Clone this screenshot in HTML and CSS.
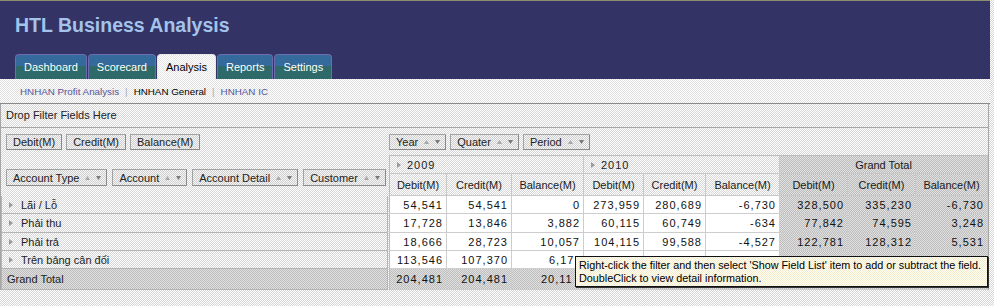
FILE: index.html
```html
<!DOCTYPE html>
<html lang="vi">
<head>
<meta charset="utf-8">
<title>HTL Business Analysis</title>
<link rel="stylesheet" href="styles.css">
</head>
<body>
<div class="app">
  <header class="masthead">
    <h1 class="brand">HTL Business Analysis</h1>
    <nav class="tabs">
      <span class="tab">Dashboard</span>
      <span class="tab">Scorecard</span>
      <span class="tab active">Analysis</span>
      <span class="tab">Reports</span>
      <span class="tab">Settings</span>
    </nav>
  </header>

  <div class="subnav">
    <a class="sublink">HNHAN Profit Analysis</a><span class="sep">|</span><span class="sublink current">HNHAN General</span><span class="sep">|</span><a class="sublink">HNHAN IC</a>
  </div>

  <section class="pivot">
    <div class="filter-zone">Drop Filter Fields Here</div>
    <div class="grid">
      <div class="data-fields">
        <span class="fbtn">Debit(M)</span>
        <span class="fbtn">Credit(M)</span>
        <span class="fbtn">Balance(M)</span>
      </div>
      <div class="col-fields">
        <span class="fbtn sortable">Year<span class="sorts"><svg class="up" width="5" height="4" viewBox="0 0 5 4"><path d="M2.5 0L5 4H0z"/></svg><svg class="down" width="5" height="4" viewBox="0 0 5 4"><path d="M0 0H5L2.5 4z"/></svg></span></span>
        <span class="fbtn sortable">Quater<span class="sorts"><svg class="up" width="5" height="4" viewBox="0 0 5 4"><path d="M2.5 0L5 4H0z"/></svg><svg class="down" width="5" height="4" viewBox="0 0 5 4"><path d="M0 0H5L2.5 4z"/></svg></span></span>
        <span class="fbtn sortable">Period<span class="sorts"><svg class="up" width="5" height="4" viewBox="0 0 5 4"><path d="M2.5 0L5 4H0z"/></svg><svg class="down" width="5" height="4" viewBox="0 0 5 4"><path d="M0 0H5L2.5 4z"/></svg></span></span>
      </div>

      <div class="row-fields">
        <span class="fbtn sortable">Account Type<span class="sorts"><svg class="up" width="5" height="4" viewBox="0 0 5 4"><path d="M2.5 0L5 4H0z"/></svg><svg class="down" width="5" height="4" viewBox="0 0 5 4"><path d="M0 0H5L2.5 4z"/></svg></span></span>
        <span class="fbtn sortable">Account<span class="sorts"><svg class="up" width="5" height="4" viewBox="0 0 5 4"><path d="M2.5 0L5 4H0z"/></svg><svg class="down" width="5" height="4" viewBox="0 0 5 4"><path d="M0 0H5L2.5 4z"/></svg></span></span>
        <span class="fbtn sortable">Account Detail<span class="sorts"><svg class="up" width="5" height="4" viewBox="0 0 5 4"><path d="M2.5 0L5 4H0z"/></svg><svg class="down" width="5" height="4" viewBox="0 0 5 4"><path d="M0 0H5L2.5 4z"/></svg></span></span>
        <span class="fbtn sortable">Customer<span class="sorts"><svg class="up" width="5" height="4" viewBox="0 0 5 4"><path d="M2.5 0L5 4H0z"/></svg><svg class="down" width="5" height="4" viewBox="0 0 5 4"><path d="M0 0H5L2.5 4z"/></svg></span></span>
      </div>

      <div class="colhead year first"><svg class="exp" width="4" height="6" viewBox="0 0 4 6"><path d="M0 0L4 3L0 6z"/></svg><span class="num">2009</span></div>
      <div class="colhead year"><svg class="exp" width="4" height="6" viewBox="0 0 4 6"><path d="M0 0L4 3L0 6z"/></svg><span class="num">2010</span></div>
      <div class="colhead total">Grand Total</div>

      <div class="measure first">Debit(M)</div>
      <div class="measure">Credit(M)</div>
      <div class="measure">Balance(M)</div>
      <div class="measure">Debit(M)</div>
      <div class="measure">Credit(M)</div>
      <div class="measure">Balance(M)</div>
      <div class="measure gt">Debit(M)</div>
      <div class="measure gt">Credit(M)</div>
      <div class="measure gt">Balance(M)</div>

      <div class="rowhead"><svg class="exp" width="4" height="6" viewBox="0 0 4 6"><path d="M0 0L4 3L0 6z"/></svg>Lãi / Lỗ</div>
      <div class="val first">54,541</div><div class="val">54,541</div><div class="val">0</div>
      <div class="val">273,959</div><div class="val">280,689</div><div class="val">-6,730</div>
      <div class="val gt">328,500</div><div class="val gt">335,230</div><div class="val gt">-6,730</div>

      <div class="rowhead"><svg class="exp" width="4" height="6" viewBox="0 0 4 6"><path d="M0 0L4 3L0 6z"/></svg>Phải thu</div>
      <div class="val first">17,728</div><div class="val">13,846</div><div class="val">3,882</div>
      <div class="val">60,115</div><div class="val">60,749</div><div class="val">-634</div>
      <div class="val gt">77,842</div><div class="val gt">74,595</div><div class="val gt">3,248</div>

      <div class="rowhead"><svg class="exp" width="4" height="6" viewBox="0 0 4 6"><path d="M0 0L4 3L0 6z"/></svg>Phải trả</div>
      <div class="val first">18,666</div><div class="val">28,723</div><div class="val">10,057</div>
      <div class="val">104,115</div><div class="val">99,588</div><div class="val">-4,527</div>
      <div class="val gt">122,781</div><div class="val gt">128,312</div><div class="val gt">5,531</div>

      <div class="rowhead"><svg class="exp" width="4" height="6" viewBox="0 0 4 6"><path d="M0 0L4 3L0 6z"/></svg>Trên bảng cân đối</div>
      <div class="val first">113,546</div><div class="val">107,370</div><div class="val clip"><span class="clipped">6,17</span></div>
      <div class="val"></div><div class="val"></div><div class="val"></div>
      <div class="val gt"></div><div class="val gt"></div><div class="val gt"></div>

      <div class="rowhead grand">Grand Total</div>
      <div class="val first grandv">204,481</div><div class="val grandv">204,481</div><div class="val grandv clip"><span class="clipped">20,11</span></div>
      <div class="val grandv"></div><div class="val grandv"></div><div class="val grandv"></div>
      <div class="val grandv"></div><div class="val grandv"></div><div class="val grandv"></div>
    </div>
  </section>

  <div class="tooltip">Right-click the filter and then select 'Show Field List' item to add or subtract the field.<br>DoubleClick to view detail information.</div>
</div>
</body>
</html>
```

FILE: styles.css
```css
* { box-sizing: border-box; }

html, body {
  margin: 0;
  padding: 0;
}

body {
  font-family: "Liberation Sans", Arial, sans-serif;
  font-size: 11px;
  color: #1a1a1a;
  background-color: #ececec;
  background-image: repeating-conic-gradient(#d6d6d6 0 25%, #ffffff 0 50%);
  background-size: 2px 2px;
}

.app {
  position: relative;
  width: 990px;
  height: 306px;
}

/* ---------- masthead ---------- */
.masthead {
  height: 79px;
  background: #333366;
  border-top: 1px solid #8d8d6e;
  display: flex;
  flex-direction: column;
}

.brand {
  margin: 0;
  padding: 13px 0 0 15px;
  font-size: 19.5px;
  line-height: 22px;
  font-weight: bold;
  color: #a3c3ea;
}

.tabs {
  margin-top: auto;
  padding-left: 15px;
  display: flex;
  gap: 1px;
  align-items: flex-end;
}

.tab {
  height: 25px;
  padding: 0 8px;
  border: 1px solid #6c6cae;
  border-bottom: none;
  border-radius: 4px 4px 0 0;
  background: linear-gradient(#356a9c 0 46%, #2f6a6a 46% 100%);
  color: #ffffff;
  font-size: 11px;
  line-height: 25px;
  white-space: nowrap;
}

.tab.active {
  border-color: #e8e8e8;
  background-color: #f6f6f6;
  background-image: repeating-conic-gradient(#e4e4e4 0 25%, #ffffff 0 50%);
  background-size: 2px 2px;
  color: #000;
}

/* ---------- sub navigation ---------- */
.subnav {
  height: 25px;
  padding-left: 20px;
  border-bottom: 1px solid #8a8a8a;
  display: flex;
  align-items: center;
  font-size: 9.8px;
  background-color: #f3f3f3;
  background-image: repeating-conic-gradient(#e0e0e0 0 25%, #ffffff 0 50%);
  background-size: 2px 2px;
}

.sublink {
  color: #55559a;
  text-decoration: none;
}

.sublink.current {
  color: #000;
}

.sep {
  color: #aaaaaa;
  margin: 0 6px;
}

/* ---------- pivot ---------- */
.pivot {
  width: 989px;
  border-left: 1px solid #a6a6a6;
  border-right: 1px solid #a6a6a6;
}

.filter-zone {
  height: 24px;
  padding-left: 5px;
  border-bottom: 1px solid #a6a6a6;
  line-height: 23px;
  font-size: 11px;
  color: #222;
}

.grid {
  display: grid;
  grid-template-columns: 388px 58px 65px 72px 60px 62px 74px 68px 68px 72px;
  grid-template-rows: 27px 19px 22px 18px 19px 18px 18px 21px;
}

.data-fields {
  display: flex;
  align-items: center;
  gap: 4px;
  padding-left: 5px;
}

.col-fields {
  grid-column: 2 / span 9;
  display: flex;
  align-items: center;
  gap: 4px;
}

.row-fields {
  grid-row: span 2;
  display: flex;
  align-items: center;
  gap: 5px;
  padding: 4px 0 0 5px;
}

.fbtn {
  height: 16px;
  padding: 0 6px;
  display: inline-flex;
  align-items: center;
  border: 1px solid #a3a3a3;
  border-right-color: #8a8a8a;
  border-bottom-color: #8a8a8a;
  background-color: #e6e6e6;
  background-image: repeating-conic-gradient(#cfcfcf 0 25%, #f6f6f6 0 50%);
  background-size: 2px 2px;
  color: #222;
  white-space: nowrap;
  font-size: 11px;
}

.row-fields .fbtn {
  height: 17px;
}

.fbtn.sortable {
  padding: 0 5px 0 6px;
}

.sorts {
  display: inline-flex;
  align-items: center;
  gap: 6px;
  margin-left: 6px;
}

.sorts .up { fill: #a8a8a8; }
.sorts .down { fill: #7a7a7a; }

.num,
.val {
  letter-spacing: 1px;
}

.colhead {
  grid-column: span 3;
  display: flex;
  align-items: center;
  gap: 6px;
  padding-left: 7px;
  border-top: 1px solid #bcbcbc;
  border-right: 1px solid #c8c8c8;
  border-bottom: 1px solid #c8c8c8;
  font-size: 11px;
}

.colhead.first {
  border-left: 1px solid #bcbcbc;
}

.colhead.total {
  justify-content: center;
  padding-left: 0;
  background-color: #cfcfcf;
  background-image: repeating-conic-gradient(#bdbdbd 0 25%, #e0e0e0 0 50%);
  background-size: 2px 2px;
}

.exp {
  fill: #9a9a9a;
  flex: none;
}

.measure {
  display: flex;
  align-items: center;
  justify-content: center;
  border-right: 1px solid #c8c8c8;
  border-bottom: 1px solid #c8c8c8;
  white-space: nowrap;
}

.measure.first,
.val.first {
  border-left: 1px solid #bcbcbc;
}

.measure.gt,
.val.gt,
.val.grandv,
.rowhead.grand {
  background-color: #cfcfcf;
  background-image: repeating-conic-gradient(#bdbdbd 0 25%, #e0e0e0 0 50%);
  background-size: 2px 2px;
}

.rowhead {
  display: flex;
  align-items: center;
  gap: 8px;
  padding-left: 7px;
  border-left: 1px solid #b4b4b4;
  border-bottom: 1px solid #b4b4b4;
  border-right: 1px solid #b4b4b4;
  margin-right: 1px;
  font-size: 11px;
  color: #222;
  white-space: nowrap;
}

.rowhead.grand {
  padding-left: 5px;
}

.val {
  display: flex;
  align-items: center;
  justify-content: flex-end;
  padding-right: 3px;
  background: #ffffff;
  border-right: 1px solid #cdcdcd;
  border-bottom: 1px solid #cdcdcd;
  color: #111;
  white-space: nowrap;
}

/* value whose last digit sits under the tooltip */
.val.clip {
  justify-content: flex-start;
  padding-left: 37px;
  padding-right: 0;
}

.val.grandv.clip {
  padding-left: 29px;
}

/* ---------- tooltip ---------- */
.tooltip {
  position: absolute;
  left: 575px;
  top: 256px;
  width: 413px;
  height: 31px;
  padding: 2px 0 0 3px;
  border: 1px solid #111;
  box-shadow: 1px 1px 0 #333;
  background-color: #fffbe6;
  background-image: repeating-conic-gradient(#f3ead0 0 25%, #fffff2 0 50%);
  background-size: 2px 2px;
  color: #000;
  font-size: 10.8px;
  line-height: 13px;
  white-space: nowrap;
}
```
